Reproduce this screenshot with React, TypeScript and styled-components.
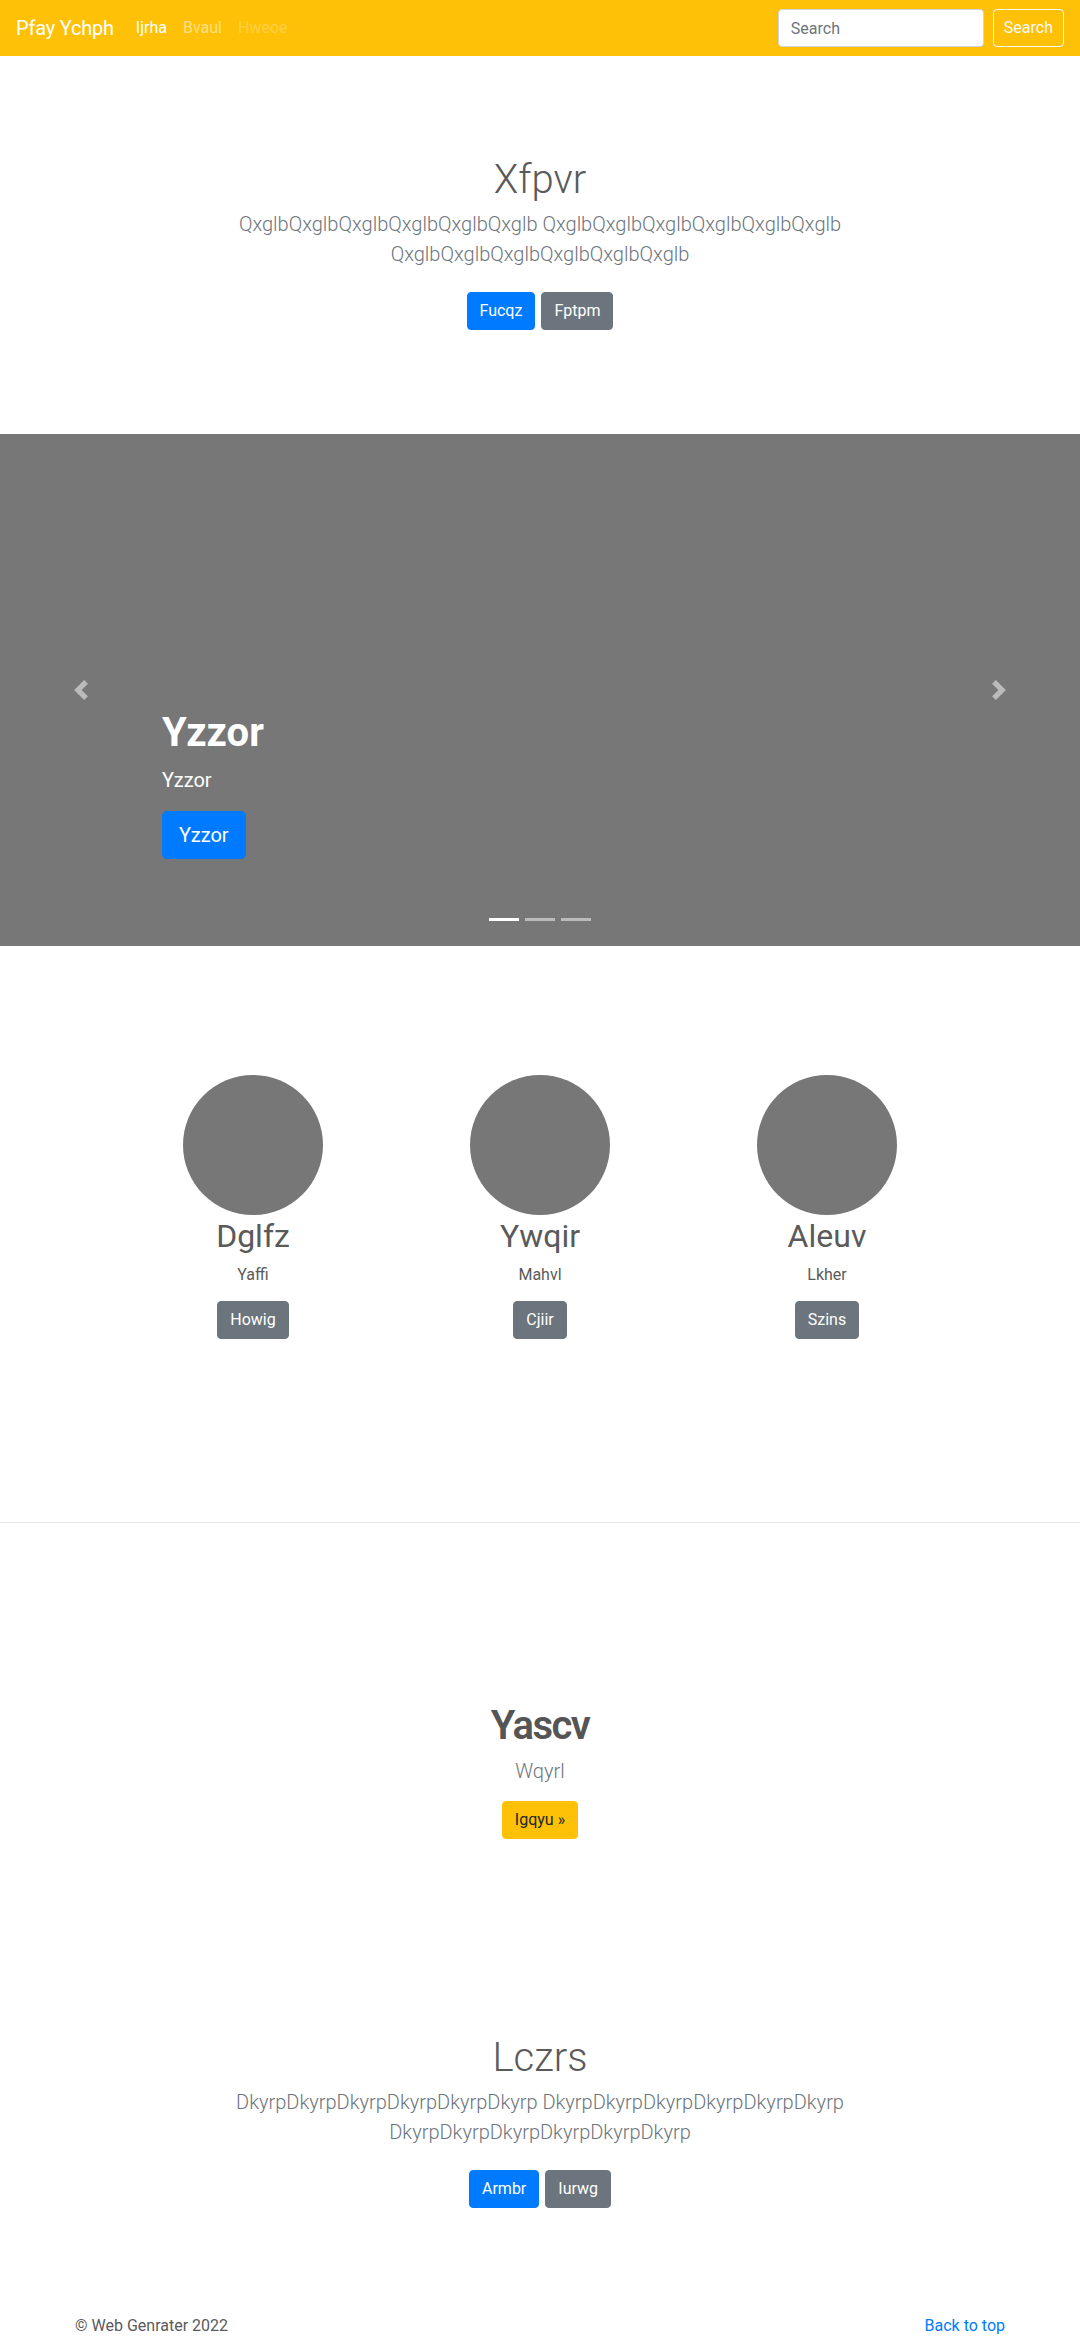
import React from "react";
import styled, { createGlobalStyle, css } from "styled-components";

const GlobalStyle = createGlobalStyle`
  * { box-sizing: border-box; }
  body {
    margin: 0;
    font-family: Roboto, "Liberation Sans", Arial, sans-serif;
    font-size: 16px;
    line-height: 1.5;
    color: #5a5a5a;
    background: #fff;
  }
`;

const Navbar = styled.nav`
  height: 56px;
  background: #ffc107;
  padding: 0 16px;
  display: flex;
  align-items: center;
`;

const Brand = styled.a`
  font-size: 20px;
  line-height: 30px;
  color: #fff;
  margin-right: 14px;
  letter-spacing: -0.2px;
  text-decoration: none;
`;

const NavLinks = styled.div`
  display: flex;
  align-items: center;
`;

const NavLink = styled.a<{ $state: "active" | "normal" | "disabled" }>`
  padding: 8px 8px;
  font-size: 16px;
  text-decoration: none;
  color: ${(p) =>
    p.$state === "active"
      ? "#fff"
      : p.$state === "normal"
      ? "rgba(255,255,255,0.5)"
      : "rgba(255,255,255,0.25)"};
`;

const SearchForm = styled.form`
  margin-left: auto;
  display: flex;
  align-items: center;
  gap: 9px;
`;

const SearchInput = styled.input`
  width: 206px;
  height: 38px;
  padding: 6px 12px;
  font-family: inherit;
  font-size: 16px;
  color: #495057;
  background: #fff;
  border: 1px solid #ced4da;
  border-radius: 4px;
  outline: none;
  &::placeholder { color: #6c757d; }
`;

type Variant = "primary" | "secondary" | "warning" | "outlineLight";

const variants: Record<Variant, ReturnType<typeof css>> = {
  primary: css`background: #007bff; border-color: #007bff; color: #fff;`,
  secondary: css`background: #6c757d; border-color: #6c757d; color: #fff;`,
  warning: css`background: #ffc107; border-color: #ffc107; color: #212529;`,
  outlineLight: css`background: transparent; border-color: #f8f9fa; color: #f8f9fa; padding-left: 10px; padding-right: 10px;`,
};

const Button = styled.a<{ $variant: Variant; $lg?: boolean }>`
  display: inline-block;
  font-family: inherit;
  font-weight: 400;
  text-decoration: none;
  border: 1px solid transparent;
  white-space: nowrap;
  cursor: pointer;
  ${(p) =>
    p.$lg
      ? css`padding: 8px 16px; font-size: 20px; line-height: 30px; border-radius: 4.8px;`
      : css`padding: 6px 12px; font-size: 16px; line-height: 24px; border-radius: 4px;`}
  ${(p) => variants[p.$variant]}
`;

const Jumbotron = styled.section<{ $top: number; $bottom: number }>`
  text-align: center;
  padding: ${(p) => p.$top}px 15px ${(p) => p.$bottom}px;
`;

const JumboInner = styled.div`
  max-width: 640px;
  margin: 0 auto;
  padding: 0 15px;
`;

const LightHeading = styled.h1`
  font-size: 40px;
  font-weight: 300;
  line-height: 1.2;
  margin: 0 0 5px;
`;

const Lead = styled.p<{ $gap: number }>`
  font-size: 20px;
  font-weight: 300;
  line-height: 30px;
  color: #6c757d;
  margin: 0 0 ${(p) => p.$gap}px;
`;

const ButtonRow = styled.div`
  display: flex;
  justify-content: center;
  gap: 6px;
`;

const Carousel = styled.section`
  position: relative;
  height: 512px;
  background: #777;
  overflow: hidden;
`;

const Control = styled.a<{ $side: "left" | "right" }>`
  position: absolute;
  top: 0;
  bottom: 0;
  ${(p) => (p.$side === "left" ? "left: 0;" : "right: 0;")}
  width: 15%;
  display: flex;
  align-items: center;
  justify-content: center;
  opacity: 0.5;
`;

const Caption = styled.div`
  position: absolute;
  left: 15%;
  right: 15%;
  bottom: 87px;
  color: #fff;
  text-align: left;
`;

const CaptionTitle = styled.h1`
  font-size: 40px;
  font-weight: 700;
  line-height: 1.2;
  margin: 0 0 8px;
`;

const CaptionText = styled.p`
  font-size: 20px;
  line-height: 30px;
  margin: 0 0 16px;
`;

const Indicators = styled.ol`
  position: absolute;
  left: 0;
  right: 0;
  bottom: 25px;
  margin: 0;
  padding: 0;
  list-style: none;
  display: flex;
  justify-content: center;
  gap: 6px;
`;

const Indicator = styled.li<{ $active?: boolean }>`
  width: 30px;
  height: 3px;
  background: ${(p) => (p.$active ? "#fff" : "rgba(255,255,255,0.5)")};
`;

const Marketing = styled.section`
  padding: 129px 0 183px;
`;

const MarketingGrid = styled.div`
  width: 861px;
  margin: 0 auto;
  display: grid;
  grid-template-columns: repeat(3, 1fr);
`;

const Feature = styled.div`
  display: flex;
  flex-direction: column;
  align-items: center;
  text-align: center;
`;

const Avatar = styled.div`
  width: 140px;
  height: 140px;
  border-radius: 50%;
  background: #777;
  margin-bottom: 2px;
`;

const FeatureTitle = styled.h2`
  font-size: 32px;
  font-weight: 400;
  line-height: 1.2;
  margin: 0 0 8px;
`;

const FeatureText = styled.p`
  margin: 0 0 14px;
`;

const Divider = styled.hr`
  margin: 0;
  border: 0;
  border-top: 1px solid rgba(0, 0, 0, 0.1);
`;

const Callout = styled.section`
  text-align: center;
  padding: 179px 15px 0;
`;

const BoldHeading = styled.h2`
  font-size: 40px;
  font-weight: 600;
  line-height: 1.2;
  letter-spacing: -1.5px;
  margin: 0 0 6px;
  color: #555;
`;

const Footer = styled.footer`
  max-width: 960px;
  margin: 0 auto;
  padding: 0 15px;
  display: flex;
  justify-content: space-between;
`;

const FooterText = styled.p`
  margin: 0;
`;

const FooterLink = styled.a`
  color: #007bff;
  text-decoration: none;
`;

const Chevron = ({ dir }: { dir: "left" | "right" }) => (
  <svg width="20" height="20" viewBox="0 0 8 8" fill="#fff">
    <path
      d={
        dir === "left"
          ? "M5.25 0l-4 4 4 4 1.5-1.5-2.5-2.5 2.5-2.5-1.5-1.5z"
          : "M2.75 0l-1.5 1.5 2.5 2.5-2.5 2.5 1.5 1.5 4-4-4-4z"
      }
    />
  </svg>
);

const features = [
  { title: "Dglfz", text: "Yaffi", btn: "Howig" },
  { title: "Ywqir", text: "Mahvl", btn: "Cjiir" },
  { title: "Aleuv", text: "Lkher", btn: "Szins" },
];

const q = "QxglbQxglbQxglbQxglbQxglbQxglb";
const d = "DkyrpDkyrpDkyrpDkyrpDkyrpDkyrp";

export default function App() {
  return (
    <>
      <GlobalStyle />
      <Navbar>
        <Brand href="#">Pfay Ychph</Brand>
        <NavLinks>
          <NavLink $state="active" href="#">Ijrha</NavLink>
          <NavLink $state="normal" href="#">Bvaul</NavLink>
          <NavLink $state="disabled" href="#">Hweoe</NavLink>
        </NavLinks>
        <SearchForm onSubmit={(e) => e.preventDefault()}>
          <SearchInput placeholder="Search" />
          <Button $variant="outlineLight" as="button">Search</Button>
        </SearchForm>
      </Navbar>

      <Jumbotron $top={100} $bottom={104}>
        <JumboInner>
          <LightHeading>Xfpvr</LightHeading>
          <Lead $gap={23}>
            {q} {q} {q}
          </Lead>
          <ButtonRow>
            <Button $variant="primary" href="#">Fucqz</Button>
            <Button $variant="secondary" href="#">Fptpm</Button>
          </ButtonRow>
        </JumboInner>
      </Jumbotron>

      <Carousel>
        <Control $side="left" href="#"><Chevron dir="left" /></Control>
        <Caption>
          <CaptionTitle>Yzzor</CaptionTitle>
          <CaptionText>Yzzor</CaptionText>
          <Button $variant="primary" $lg href="#">Yzzor</Button>
        </Caption>
        <Control $side="right" href="#"><Chevron dir="right" /></Control>
        <Indicators>
          <Indicator $active />
          <Indicator />
          <Indicator />
        </Indicators>
      </Carousel>

      <Marketing>
        <MarketingGrid>
          {features.map((f) => (
            <Feature key={f.title}>
              <Avatar />
              <FeatureTitle>{f.title}</FeatureTitle>
              <FeatureText>{f.text}</FeatureText>
              <Button $variant="secondary" href="#">{f.btn}</Button>
            </Feature>
          ))}
        </MarketingGrid>
      </Marketing>

      <Divider />

      <Callout>
        <BoldHeading>Yascv</BoldHeading>
        <Lead $gap={15}>Wqyrl</Lead>
        <Button $variant="warning" href="#">Igqyu »</Button>
      </Callout>

      <Jumbotron $top={195} $bottom={106}>
        <JumboInner>
          <LightHeading>Lczrs</LightHeading>
          <Lead $gap={23}>
            {d} {d} {d}
          </Lead>
          <ButtonRow>
            <Button $variant="primary" href="#">Armbr</Button>
            <Button $variant="secondary" href="#">Iurwg</Button>
          </ButtonRow>
        </JumboInner>
      </Jumbotron>

      <Footer>
        <FooterText>© Web Genrater 2022</FooterText>
        <FooterLink href="#">Back to top</FooterLink>
      </Footer>
    </>
  );
}
